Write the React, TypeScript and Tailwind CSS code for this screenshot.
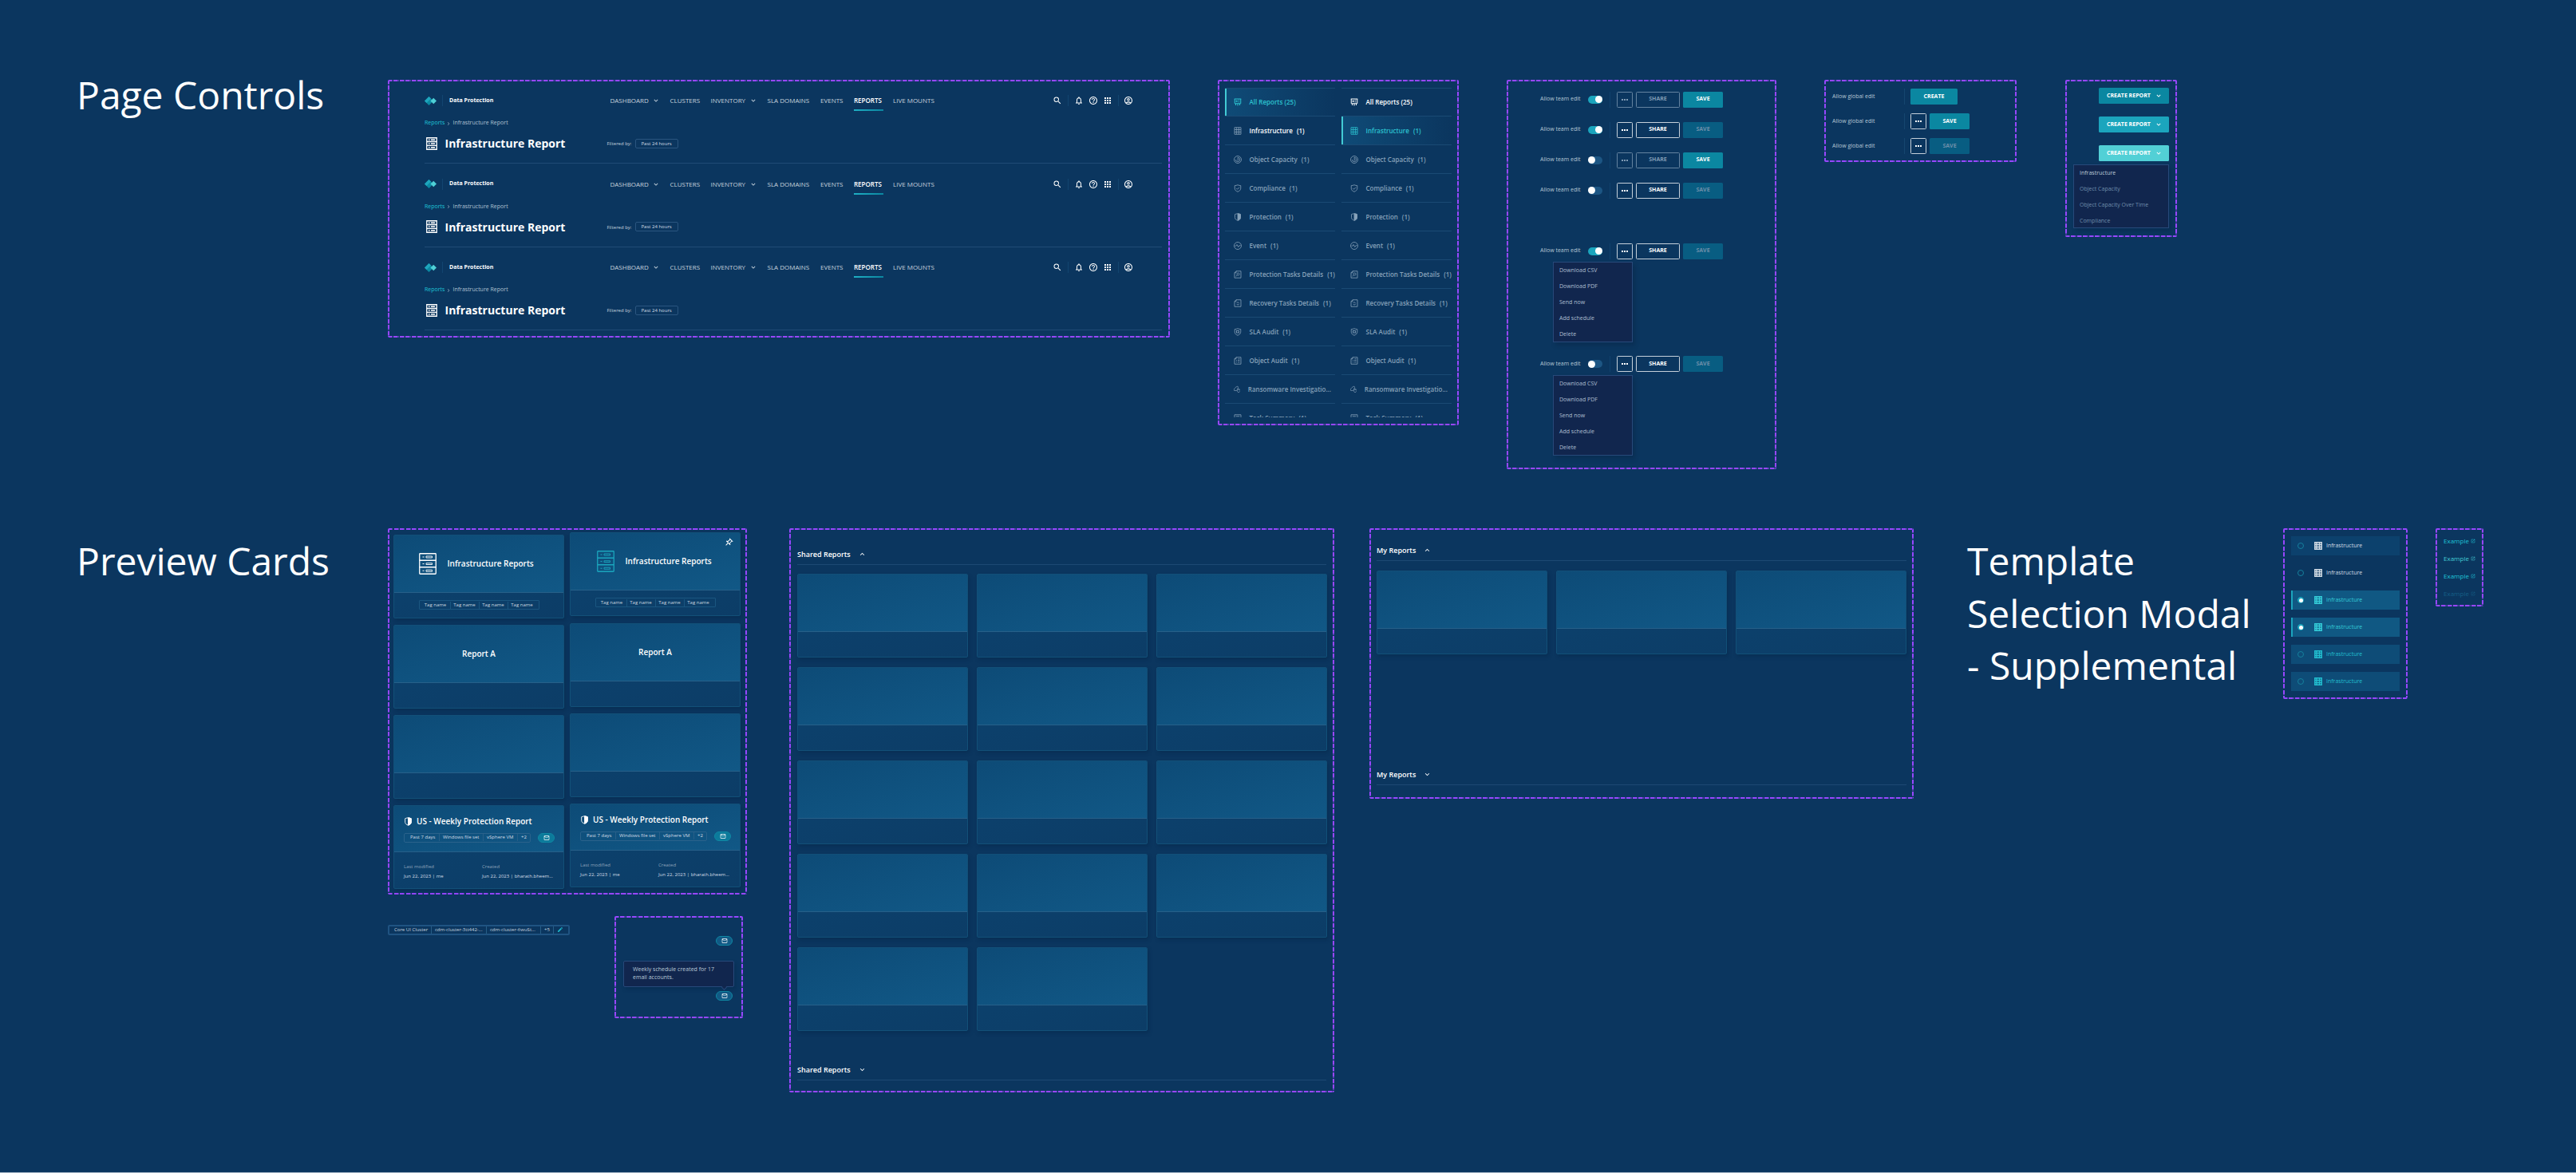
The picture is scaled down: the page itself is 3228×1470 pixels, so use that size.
import type { ReactNode } from 'react';
import clsx from 'clsx';
import {
  MdApps,
  MdEdit,
  MdHelpOutline,
  MdKeyboardArrowDown,
  MdKeyboardArrowUp,
  MdNotificationsNone,
  MdOpenInNew,
  MdOutlineAccountCircle,
  MdOutlineEmail,
  MdOutlinePushPin,
  MdSearch,
} from 'react-icons/md';

// dashed component-set outline, repeats every 7.5px
const DASHED =
  'bg-[repeating-linear-gradient(90deg,#9747ff_0_5px,#5540b0_5px_6.2px,transparent_6.2px_7.5px),repeating-linear-gradient(90deg,#9747ff_0_5px,#5540b0_5px_6.2px,transparent_6.2px_7.5px),repeating-linear-gradient(180deg,#9747ff_0_5px,#5540b0_5px_6.2px,transparent_6.2px_7.5px),repeating-linear-gradient(180deg,#9747ff_0_5px,#5540b0_5px_6.2px,transparent_6.2px_7.5px)] bg-no-repeat [background-size:100%_2px,100%_2px,2px_100%,2px_100%] [background-position:0_0,0_100%,0_0,100%_0]';

function Frame({ className, children }: { className?: string; children: ReactNode }) {
  return <div className={clsx('shrink-0 rounded-[2px]', DASHED, className)}>{children}</div>;
}

/* ---------- icons ---------- */

function Svg({ className, children }: { className?: string; children: ReactNode }) {
  return (
    <svg viewBox="0 0 20 20" fill="none" stroke="currentColor" strokeWidth="1.6" className={clsx('shrink-0', className)}>
      {children}
    </svg>
  );
}

function Logo() {
  return (
    <svg viewBox="0 0 30 22" className="w-[15px] h-[11px] shrink-0">
      <path d="M11 0 22 11 11 22 0 11z" fill="#0b8aa3" />
      <path d="M11 0 16 5 5 16 0 11z" fill="#1fa6bd" />
      <path d="M22.5 3.5 30 11l-7.5 7.5L15 11z" fill="#4fd0d6" />
    </svg>
  );
}

function ServerIcon({ className }: { className?: string }) {
  return (
    <svg viewBox="0 0 28 32" fill="none" stroke="currentColor" strokeWidth="2.6" className={clsx('shrink-0', className)}>
      <path d="M1.5 1.5h25v29h-25zM1.5 11h25M1.5 20.8h25" />
      <path d="M6 6.3h3M12 6.3h10M6 16h3M12 16h10M6 25.7h3M12 25.7h10" strokeWidth="3" />
    </svg>
  );
}

function RackIcon({ className }: { className?: string }) {
  return (
    <svg viewBox="0 0 44 54" fill="none" stroke="currentColor" strokeWidth="2.6" className={clsx('shrink-0', className)}>
      <rect x="1.5" y="1.5" width="41" height="51" rx="1.5" />
      <path d="M1.5 18.5h41M1.5 35.5h41" />
      <path d="M18 8h15v4H18zM18 25.5h15v3.5H18zM18 42.5h15v4H18z" strokeWidth="1.8" />
      <path d="M9 10h4M9 27.2h4M9 44.5h4" strokeWidth="2" />
    </svg>
  );
}

const GridIcon = () => (
  <Svg>
    <path d="M2 1.5h16v17H2zM2 7h16M2 12.8h16M7.4 1.5v17M12.8 1.5v17" />
  </Svg>
);

const ShieldHalf = () => (
  <Svg>
    <path d="M10 1.5c2.6.2 5 .8 7 1.8v8c0 3.600-3 6-7 7.200-4-1.200-7-3.600-7-7.200v-8c2-1 4.400-1.600 7-1.800z" />
    <path d="M10 1.500c2.600.200 5 .800 7 1.800v8c0 3.600-3 6-7 7.200z" fill="currentColor" />
  </Svg>
);

const ICONS: Record<string, ReactNode> = {
  board: (
    <Svg>
      <path d="M1.500 2h17M2.500 2v11.500h15V2M5 14v4M10 14v5M15 14v4" strokeWidth="2" />
      <path d="M6 6h2.500v3H6zM11 5.500h3.500M11 9.500h3.500" />
    </Svg>
  ),
  grid: <GridIcon />,
  capacity: (
    <Svg>
      <circle cx="10" cy="10" r="9" />
      <path d="M10 4.500a5.500 5.500 0 1 1-5.500 5.500M10 4.500v3.500a2 2 0 1 1-2 2.500" strokeWidth="1.400" />
    </Svg>
  ),
  compliance: (
    <Svg>
      <path d="M10 1.500c2.600 1.200 5 1.600 7.500 1.700v7c0 4-3.200 6.800-7.500 8.300-4.300-1.500-7.500-4.300-7.500-8.300v-7C5 3.100 7.400 2.700 10 1.500z" />
      <path d="m6.500 10 2.500 2.500 5-5" />
    </Svg>
  ),
  protection: <ShieldHalf />,
  event: (
    <Svg>
      <circle cx="10" cy="10" r="9" />
      <path d="M3 10.500h2.500L8 7l3.500 6L14 9.500h3" />
    </Svg>
  ),
  tasks: (
    <Svg>
      <path d="M6 1.500h12v17H2v-13zM2 5.500h4v-4" />
      <circle cx="11" cy="9" r="3" />
      <path d="m8.800 11.300-3 3.500" />
    </Svg>
  ),
  recovery: (
    <Svg>
      <path d="M6 1.500h12v17H2v-13zM2 5.500h4v-4" />
      <path d="M7.500 9.500a3 3 0 0 1 5.500 0M13.500 11.500a3.200 3.200 0 0 1-6 .5" />
    </Svg>
  ),
  sla: (
    <Svg>
      <path d="M10 1.500c2.600 1.200 5 1.600 7.500 1.700v7c0 4-3.200 6.800-7.500 8.300-4.300-1.500-7.500-4.300-7.500-8.300v-7C5 3.100 7.400 2.700 10 1.500z" />
      <rect x="7" y="7" width="6" height="5" />
      <path d="m12 11 2 2" />
    </Svg>
  ),
  audit: (
    <Svg>
      <path d="M6 1.500h12v17H2v-13zM2 5.500h4v-4" />
      <path d="M6 9h2M10 9h5M6 13.500h2M10 13.500h5M11 5.500h4" />
    </Svg>
  ),
  ransomware: (
    <Svg>
      <path d="M9 13.500H1.500C-.5 9 4.500 3 11.500 1c2.500 2.500 1.500 4.500 0 7" />
      <path d="M10 10.500h9c.5 4.500-2 8-5 8-2.500 0-4-2.500-4-8zM10 10.500C10 8 12 7 14.500 8v2.500" />
    </Svg>
  ),
  summary: (
    <Svg>
      <path d="M2 1.500h16v17H2zM5.500 5.500h9M5.500 9h9" />
    </Svg>
  ),
};

/* ---------- page controls ---------- */

function Header() {
  const item = 'text-[#c6d2dd] font-medium';
  return (
    <div className="h-[104.5px] pl-[46px] pr-[10px] pt-[18px]">
      <div className="flex h-full flex-col border-b border-[#204b75]">
        <div className="flex h-[15px] items-center text-[8px] whitespace-nowrap">
          <Logo />
          <div className="ml-[7px] w-px h-[14px] bg-[#124570]" />
          <span className="ml-[8px] w-[201.5px] text-[7px] font-bold text-white">Data Protection</span>
          <span className={clsx(item, 'w-[52px]')}>DASHBOARD</span>
          <MdKeyboardArrowDown className="w-[10px] h-[10px] text-[#c6d2dd]" />
          <span className={clsx(item, 'ml-[13px] w-[51px]')}>CLUSTERS</span>
          <span className={clsx(item, 'w-[48px]')}>INVENTORY</span>
          <MdKeyboardArrowDown className="w-[10px] h-[10px] text-[#c6d2dd]" />
          <span className={clsx(item, 'ml-[13px] w-[66.5px]')}>SLA DOMAINS</span>
          <span className={clsx(item, 'w-[42px]')}>EVENTS</span>
          <span className="relative w-[49px] font-semibold text-white">
            REPORTS
            <span className="absolute left-0 -bottom-[7px] w-[37px] h-[2px] bg-linear-to-r from-[#1fb0c4] to-[#0b86a0]" />
          </span>
          <span className={item}>LIVE MOUNTS</span>
          <div className="ml-auto mr-[36px] flex items-center text-[12px] text-white">
            <MdSearch />
            <div className="ml-[7px] mr-[7px] w-px h-[14px] bg-[#124570]" />
            <MdNotificationsNone />
            <MdHelpOutline className="ml-[6px]" />
            <MdApps className="ml-[6px]" />
            <div className="ml-[7px] mr-[6.5px] w-px h-[14px] bg-[#124570]" />
            <MdOutlineAccountCircle />
          </div>
        </div>
        <div className="mt-[16px] flex h-[10px] items-center text-[7px]">
          <span className="text-[#1fc3d6]">Reports</span>
          <MdKeyboardArrowDown className="w-[8px] h-[8px] mx-px -rotate-90 text-[#8ba3b9]" />
          <span className="text-[#afc1d1]">Infrastructure Report</span>
        </div>
        <div className="mt-[10px] flex h-[20px] items-center">
          <ServerIcon className="w-[14px] h-[16px] ml-[1.5px] text-white" />
          <h2 className="ml-[10px] w-[203px] text-[14px] leading-[19px] font-bold text-white">Infrastructure Report</h2>
          <span className="w-[35px] text-[6px] text-[#c4d1dd] translate-y-[1px]">Filtered by:</span>
          <span className="h-[12px] rounded-[2px] border border-[#2a557f] px-[7px] text-[6px] leading-[10px] text-[#d0dae3] whitespace-nowrap">
            Past 24 hours
          </span>
        </div>
      </div>
    </div>
  );
}

const REPORTS: [string, string, string][] = [
  ['board', 'All Reports (25)', ''],
  ['grid', 'Infrastructure', '(1)'],
  ['capacity', 'Object Capacity', '(1)'],
  ['compliance', 'Compliance', '(1)'],
  ['protection', 'Protection', '(1)'],
  ['event', 'Event', '(1)'],
  ['tasks', 'Protection Tasks Details', '(1)'],
  ['recovery', 'Recovery Tasks Details', '(1)'],
  ['sla', 'SLA Audit', '(1)'],
  ['audit', 'Object Audit', '(1)'],
  ['ransomware', 'Ransomware Investigatio...', ''],
  ['summary', 'Task Summary', '(1)'],
];

function ReportList({ active }: { active: number }) {
  return (
    <div className="h-[413px] w-[138px] overflow-hidden border-t border-[#1a4a74]">
      {REPORTS.map(([icon, label, count], i) => {
        const color = i === active ? 'text-[#2cc3d0]' : i < 2 ? 'text-white' : 'text-[#86a1b9]';
        return (
          <div
            key={label}
            className={clsx(
              'flex items-center border-b border-[#1a4a74] text-[8px] font-semibold whitespace-nowrap',
              i === 0 ? 'h-[35px]' : 'h-[36px]',
              color,
              i === active && 'bg-linear-to-r from-[#0f4b77] to-[#0b365f]'
            )}
          >
            <div className={clsx('h-full w-[2px]', i === active && 'bg-[#43cbd4]')} />
            <div className={clsx('ml-[9px] w-[10px] h-[10px] [&>svg]:w-full [&>svg]:h-full', i === 1 && i !== active && 'text-[#86a1b9]')}>
              {ICONS[icon]}
            </div>
            <span className="ml-[9.5px]">{label}</span>
            <span className="ml-[5px]">{count}</span>
          </div>
        );
      })}
    </div>
  );
}

function Button({ className, children, disabled }: { className: string; children: ReactNode; disabled?: boolean }) {
  return (
    <div
      className={clsx(
        'flex h-[20px] items-center justify-center rounded-[1.5px] text-[7px] font-bold',
        disabled ? 'bg-[#085d82] text-[#6d8faa]' : 'bg-[#0b87a1] text-white',
        className
      )}
    >
      {children}
    </div>
  );
}

function Outline({ className, children, disabled }: { className: string; children: ReactNode; disabled?: boolean }) {
  return (
    <div
      className={clsx(
        'flex h-[20px] items-center justify-center rounded-[1.5px] border text-[7px] font-bold',
        disabled ? 'border-[#6483a0] text-[#7f9ab3]' : 'border-[#c5d0da] text-white',
        className
      )}
    >
      {children}
    </div>
  );
}

function Dots() {
  return (
    <div className="flex gap-px">
      <div className="w-[2px] h-[2px] bg-current" />
      <div className="w-[2px] h-[2px] bg-current" />
      <div className="w-[2px] h-[2px] bg-current" />
    </div>
  );
}

function TeamEdit({ on, dirty, className }: { on?: boolean; dirty?: boolean; className?: string }) {
  return (
    <div className={clsx('flex h-[20px] items-center whitespace-nowrap', className)}>
      <span className="w-[60px] text-[7px] text-[#b6c6d5]">Allow team edit</span>
      <div className={clsx('flex w-[18px] h-[10px] items-center rounded-full', on ? 'justify-end bg-[#1ba5bd]' : 'bg-[#1d5684]')}>
        <div className="w-[9px] h-[9px] rounded-full bg-white" />
      </div>
      <div className="ml-[9px] w-px h-full bg-[#10426c]" />
      <Outline disabled={dirty} className="ml-[8px] w-[20px]">
        <Dots />
      </Outline>
      <Outline disabled={dirty} className="ml-[4px] w-[55px]">
        SHARE
      </Outline>
      <Button disabled={!dirty} className="ml-[4px] w-[50px]">
        SAVE
      </Button>
    </div>
  );
}

function Menu({ items, className, hovered }: { items: string[]; className?: string; hovered?: number }) {
  return (
    <div className={clsx('border border-[#27497a] bg-[#11264e] shadow-[3px_4px_5px_rgba(5,30,60,0.3)]', className)}>
      {items.map((t, i) => (
        <div
          key={t}
          className={clsx(
            'h-[20px] pl-[7px] text-[7px] leading-[19px] whitespace-nowrap',
            hovered === undefined ? 'text-[#adbfd0]' : hovered === i ? 'text-[#bccbd8]' : 'text-[#6f8dab]'
          )}
        >
          {t}
        </div>
      ))}
    </div>
  );
}

const ACTIONS = ['Download CSV', 'Download PDF', 'Send now', 'Add schedule', 'Delete'];
const TEMPLATES = ['Infrastructure', 'Object Capacity', 'Object Capacity Over Time', 'Compliance'];

function GlobalEdit({ children }: { children: ReactNode }) {
  return (
    <div className="flex h-[20px] items-center">
      <span className="w-[90px] text-[7px] text-[#b6c6d5]">Allow global edit</span>
      <div className="w-px h-full bg-[#15466f] mr-[7px]" />
      {children}
    </div>
  );
}

function CreateReport({ className }: { className: string }) {
  return (
    <div className={clsx('ml-auto flex h-[20px] w-[88px] items-center rounded-[1.5px] pl-[10px] text-[7px] font-bold text-white', className)}>
      <span className="w-[60px] whitespace-nowrap">CREATE REPORT</span>
      <MdKeyboardArrowDown className="w-[10px] h-[10px]" />
    </div>
  );
}

/* ---------- preview cards ---------- */

function Card({ tall, head, children }: { tall?: boolean; head?: ReactNode; children?: ReactNode }) {
  return (
    <div className="flex h-[105px] w-[214px] flex-col overflow-hidden rounded-[2px] border border-[#125078] bg-linear-to-br from-[#0c426e] to-[#0c3d67] shadow-[2px_3px_4px_rgba(4,38,72,0.4)]">
      <div
        className={clsx(
          'relative shrink-0 border-b border-[#276089] bg-linear-165 from-[#0d4b77] to-[#115886]',
          tall ? 'h-[58px]' : 'h-[72px]'
        )}
      >
        {head}
      </div>
      {children}
    </div>
  );
}

function TagCard({ pinned }: { pinned?: boolean }) {
  return (
    <Card
      head={
        <div className={clsx('flex h-full items-center', pinned ? 'pl-[33px]' : 'pl-[31px]')}>
          <RackIcon className={clsx('w-[22px] h-[27px]', pinned ? 'text-[#1ba5bd]' : 'text-white')} />
          <span className="ml-[13.5px] text-[10px] font-semibold text-white">Infrastructure Reports</span>
          {pinned && <MdOutlinePushPin className="absolute right-[8px] top-[6px] rotate-45 text-[12px] text-white" />}
        </div>
      }
    >
      <div className="mx-auto mt-[9px] flex h-[12px] w-[151px] items-center rounded-[1px] border border-[#1a5680] px-[2px] text-[6px] text-[#c6d3df]">
        {[0, 1, 2, 3].map((i) => (
          <div key={i} className={clsx('w-[36px] text-center leading-[9px]', i > 0 && 'border-l border-[#1a5680]')}>
            Tag name
          </div>
        ))}
      </div>
    </Card>
  );
}

function MailPill({ bright }: { bright?: boolean }) {
  return (
    <div
      className={clsx(
        'flex h-[12px] w-[21px] items-center justify-center rounded-full border border-[#0f88a3] text-white',
        bright ? 'bg-[#0c7a9b]' : 'bg-[#115a86]'
      )}
    >
      <MdOutlineEmail className="w-[8px] h-[8px]" />
    </div>
  );
}

const Sep = () => <div className="mx-[4px] w-px h-[9px] bg-[#275e87]" />;

function WeeklyCard() {
  return (
    <Card
      tall
      head={
        <div className="pl-[12px] pt-[12px]">
          <div className="flex items-center text-white [&>svg]:w-[11px] [&>svg]:h-[11px]">
            <ShieldHalf />
            <span className="ml-[5px] text-[10px] leading-[14px] font-semibold whitespace-nowrap">US - Weekly Protection Report</span>
          </div>
          <div className="mt-[7.5px] flex items-center">
            <div className="flex h-[12px] w-[159px] items-center rounded-[2px] border border-[#2a628b] pl-[7px] text-[6px] text-[#d0dae3] whitespace-nowrap">
              <span className="w-[32px]">Past 7 days</span>
              <Sep />
              <span className="w-[46px]">Windows file set</span>
              <Sep />
              <span className="w-[34px]">vSphere VM</span>
              <Sep />
              <span>+2</span>
            </div>
            <div className="ml-[9px]">
              <MailPill bright />
            </div>
          </div>
        </div>
      }
    >
      <div className="flex pl-[12px] pt-[12px] text-[6px] leading-[12px] whitespace-nowrap">
        <div className="w-[98px]">
          <div className="text-[#8ba1b8]">Last modified</div>
          <div className="text-[#d0dae3]">Jun 22, 2023 | me</div>
        </div>
        <div>
          <div className="text-[#8ba1b8]">Created</div>
          <div className="text-[#d0dae3]">Jun 22, 2023 | bharath.bheem...</div>
        </div>
      </div>
    </Card>
  );
}

const NamedCard = () => (
  <Card head={<div className="flex h-full items-center justify-center text-[10px] font-semibold text-white">Report A</div>} />
);

function SectionTitle({ open, children }: { open?: boolean; children: ReactNode }) {
  const Arrow = open ? MdKeyboardArrowUp : MdKeyboardArrowDown;
  return (
    <div className="flex h-[26px] items-center border-b border-[#1d4973] text-[9px] font-semibold text-white">
      {children}
      <Arrow className="ml-[9px] w-[11px] h-[11px]" />
    </div>
  );
}

/* ---------- template selection ---------- */

function TemplateRow({ selected, className }: { selected?: boolean; className: string }) {
  return (
    <div className={clsx('flex h-[24px] items-center', className)}>
      <div className={clsx('h-full w-[2px]', selected && 'bg-[#1ba5bd]')} />
      <div
        className={clsx(
          'ml-[6px] flex w-[8px] h-[8px] items-center justify-center rounded-full border',
          selected ? 'border-[#1ba5bd] bg-[#1ba5bd]' : 'border-[#15809d]'
        )}
      >
        {selected && <div className="w-[5px] h-[5px] shrink-0 rounded-full bg-white" />}
      </div>
      <div className="ml-[13px] [&>svg]:w-[10px] [&>svg]:h-[10px]">
        <svg viewBox="0 0 20 20" fill="none" stroke="currentColor" strokeWidth="2.8">
          <path d="M1.5 1.5h17v17h-17zM1.5 7h17M1.5 13h17M6 1.5v17M13 1.5v17" />
        </svg>
      </div>
      <span className="ml-[5px] text-[7px]">Infrastructure</span>
    </div>
  );
}

const heading = 'shrink-0 text-[48px] leading-[65.5px] text-white';

export default function App() {
  return (
    <div className="w-[3228px] h-[1470px] overflow-hidden border-b border-[#a5b5c6] bg-[#0b365f] pl-[96px] pt-[86px] font-['Open_Sans',sans-serif]">
      <section className="flex h-[576px] items-start">
        <h1 className={clsx(heading, 'w-[390px]')}>Page Controls</h1>

        <Frame className="mt-[14px] w-[980px] h-[323px] pt-[0.5px]">
          <Header />
          <Header />
          <Header />
        </Frame>

        <Frame className="mt-[14px] ml-[60px] w-[302px] h-[433px] flex gap-[8px] pl-[9px] pt-[10px]">
          <ReportList active={0} />
          <ReportList active={1} />
        </Frame>

        <Frame className="mt-[14px] ml-[60px] w-[338px] h-[488px] pl-[42px] pt-[14.5px]">
          <div className="flex flex-col gap-[18px]">
            <TeamEdit on dirty />
            <TeamEdit on />
            <TeamEdit dirty />
            <TeamEdit />
          </div>
          <TeamEdit on className="mt-[56px]" />
          <Menu items={ACTIONS} className="mt-[3.5px] ml-[16px] w-[100px] h-[101px]" />
          <TeamEdit className="mt-[17px]" />
          <Menu items={ACTIONS} className="mt-[3.5px] ml-[16px] w-[100px] h-[101px]" />
        </Frame>

        <Frame className="mt-[14px] ml-[60px] w-[241px] h-[103px] flex flex-col gap-[11px] pl-[10px] pt-[11px]">
          <GlobalEdit>
            <Button className="w-[59px]">CREATE</Button>
          </GlobalEdit>
          <GlobalEdit>
            <Outline className="w-[20px]">
              <Dots />
            </Outline>
            <Button className="ml-[4px] w-[50px]">SAVE</Button>
          </GlobalEdit>
          <GlobalEdit>
            <Outline className="w-[20px]">
              <Dots />
            </Outline>
            <Button disabled className="ml-[4px] w-[50px]">
              SAVE
            </Button>
          </GlobalEdit>
        </Frame>

        <Frame className="mt-[14px] ml-[61px] w-[140px] h-[197px] px-[10px] pt-[10px]">
          <div className="flex flex-col gap-[16px]">
            <CreateReport className="bg-[#0b87a1]" />
            <CreateReport className="bg-[#1ba5bd]" />
            <CreateReport className="bg-[#52d0d6]" />
          </div>
          <Menu items={TEMPLATES} hovered={0} className="mt-[4px] h-[80px] w-[120px]" />
        </Frame>
      </section>

      <section className="flex items-start">
        <h1 className={clsx(heading, 'mt-[8px] w-[390px]')}>Preview Cards</h1>

        <div className="w-[450px] shrink-0">
          <Frame className="flex h-[459px] gap-[7px] pl-[7px]">
            <div className="flex flex-col gap-[8px] pt-[8px]">
              <TagCard />
              <NamedCard />
              <Card />
              <WeeklyCard />
            </div>
            <div className="flex flex-col gap-[8px] pt-[5px]">
              <div className="mb-px">
                <TagCard pinned />
              </div>
              <NamedCard />
              <Card />
              <WeeklyCard />
            </div>
          </Frame>
          <div className="mt-[27px] flex items-start">
            <div className="mt-[10.5px] flex h-[13px] w-[228px] items-center rounded-[2px] border-2 border-[#1f5382] pl-[6px] text-[6px] text-[#c6d3df] whitespace-nowrap">
              <span className="w-[42px]">Core UI Cluster</span>
              <Sep />
              <span className="w-[60px]">cdm-cluster-3tt442-...</span>
              <Sep />
              <span className="w-[59px]">cdm-cluster-6wuSt...</span>
              <Sep />
              <span className="w-[7px]">+5</span>
              <Sep />
              <MdEdit className="w-[8px] h-[8px] text-[#1cb4c8]" />
            </div>
            <Frame className="ml-[56px] h-[128px] w-[161px] pt-[25px]">
              <div className="ml-[127px]">
                <MailPill />
              </div>
              <div className="relative mt-[19px] ml-[11px] h-[33px] w-[139px] rounded-[2px] border border-[#27497a] bg-[#11264e] pl-[11px] pt-[5px] pr-[20px] text-[7px] leading-[10px] text-[#b9c9d7] shadow-[2px_3px_4px_rgba(4,38,72,0.4)]">
                Weekly schedule created for 17 email accounts.
                <div className="absolute -bottom-[3.5px] right-[9.5px] w-[5px] h-[5px] rotate-45 border-r border-b border-[#27497a] bg-[#11264e]" />
              </div>
              <div className="mt-[5px] ml-[127px]">
                <MailPill />
              </div>
            </Frame>
          </div>
        </div>

        <Frame className="ml-[53px] h-[707px] w-[683px] px-[10px] pt-[20px]">
          <SectionTitle open>Shared Reports</SectionTitle>
          <div className="mt-[11px] grid grid-cols-[repeat(3,214px)] gap-x-[11px] gap-y-[12px]">
            {Array.from({ length: 14 }, (_, i) => (
              <Card key={i} />
            ))}
          </div>
          <div className="mt-[36px]">
            <SectionTitle>Shared Reports</SectionTitle>
          </div>
        </Frame>

        <Frame className="ml-[44px] h-[339px] w-[682px] px-[9px] pt-[15px]">
          <SectionTitle open>My Reports</SectionTitle>
          <div className="mt-[12px] grid grid-cols-[repeat(3,214px)] gap-x-[11px]">
            <Card />
            <Card />
            <Card />
          </div>
          <div className="mt-[138px]">
            <SectionTitle>My Reports</SectionTitle>
          </div>
        </Frame>

        <h1 className={clsx(heading, 'mt-[8px] ml-[67px] mr-[30px] w-[366px]')}>
          Template Selection Modal - Supplemental
        </h1>

        <Frame className="flex h-[214px] w-[156px] flex-col gap-[10px] px-[10px] pt-[10px]">
          <TemplateRow className="bg-[#0c416d] text-[#d0dae3]" />
          <TemplateRow className="text-[#d0dae3]" />
          <TemplateRow selected className="bg-[#105883] text-[#34ccd8]" />
          <TemplateRow selected className="bg-[#105883] text-[#34ccd8]" />
          <TemplateRow className="bg-[#0e4c77] text-[#22bfd0]" />
          <TemplateRow className="bg-[#0e4c77] text-[#22bfd0]" />
        </Frame>

        <Frame className="ml-[35px] flex h-[98px] w-[60px] flex-col gap-[10px] pl-[10px] pt-[10px] text-[8px]">
          {['text-[#1fc3d6]', 'text-[#43cbd4]', 'text-[#1fc3d6]', 'text-[#155f87]'].map((c, i) => (
            <div key={i} className={clsx('flex h-[12px] items-center gap-[2px] font-medium', c)}>
              Example
              <MdOpenInNew className="w-[6px] h-[6px] shrink-0" />
            </div>
          ))}
        </Frame>
      </section>
    </div>
  );
}
